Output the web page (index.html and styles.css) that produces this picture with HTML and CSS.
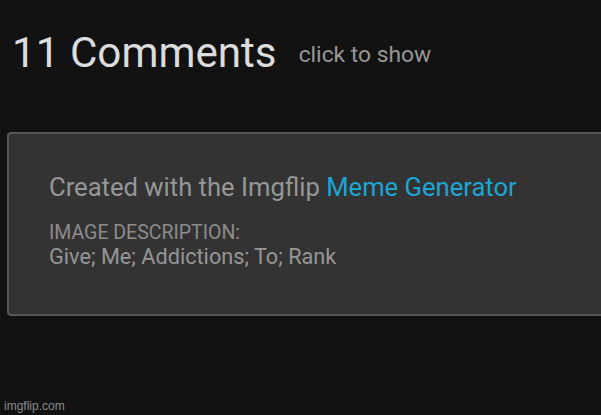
FILE: index.html
```html
<!DOCTYPE html>
<html>
<head>
<meta charset="utf-8">
<link rel="stylesheet" href="styles.css">
</head>
<body>
<div class="page">
  <div class="header">
    <h2 class="title">11 Comments</h2>
    <span class="show">click to show</span>
  </div>
  <div class="card">
    <div class="created">Created with the Imgflip <a class="link">Meme Generator</a></div>
    <div class="desc-label">IMAGE DESCRIPTION:</div>
    <div class="desc">Give; Me; Addictions; To; Rank</div>
  </div>
  <div class="watermark">imgflip.com</div>
</div>
</body>
</html>
```

FILE: styles.css
```css
html, body {
  margin: 0;
  padding: 0;
  background: #121212;
  width: 601px;
  height: 415px;
  overflow: hidden;
  font-family: Roboto, "Liberation Sans", sans-serif;
}
.page {
  position: relative;
  width: 601px;
  height: 415px;
}
.header {
  display: flex;
  align-items: flex-start;
  padding: 28px 0 0 12px;
}
.title {
  margin: 0;
  font-weight: 400;
  font-size: 42.2px;
  line-height: 50px;
  color: #dcdcdc;
}
.show {
  margin: 14px 0 0 22px;
  font-size: 22.8px;
  line-height: 26px;
  color: #979797;
}
.card {
  margin: 54px 0 0 7px;
  width: 620px;
  height: 184px;
  box-sizing: border-box;
  background: #333333;
  border: 2px solid #575757;
  border-radius: 4px;
  padding: 38px 0 0 40px;
}
.created {
  font-size: 25.6px;
  line-height: 30px;
  color: #969696;
}
.link {
  color: #1ea5d3;
}
.desc-label {
  margin-top: 20px;
  font-size: 19.5px;
  line-height: 22px;
  color: #8c8c8c;
}
.desc {
  font-size: 21.7px;
  line-height: 26px;
  color: #969696;
}
.watermark {
  position: absolute;
  left: 4px;
  bottom: 2px;
  font-family: "Liberation Sans", sans-serif;
  font-size: 12px;
  color: #8a8a8a;
}
```
